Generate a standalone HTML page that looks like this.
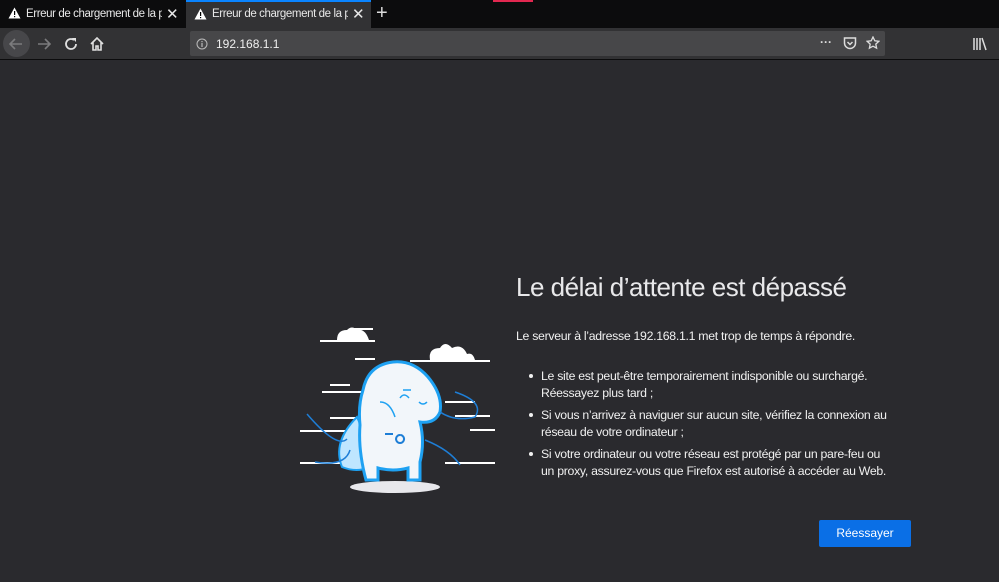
<!DOCTYPE html>
<html><head><meta charset="utf-8"><style>
*{margin:0;padding:0;box-sizing:border-box}
body{width:999px;height:582px;overflow:hidden;background:#2a2a2e;font-family:"Liberation Sans",sans-serif;color:#f9f9fa;position:relative}
.tabs{position:absolute;left:0;top:0;width:999px;height:28px;background:#0c0c0d}
.tab{position:absolute;top:0;height:28px;width:185px;font-size:11.5px;color:#e8e8e8;letter-spacing:-0.4px}
.tab .t{position:absolute;left:26px;top:8px;width:136px;overflow:hidden;white-space:nowrap}
.tab .x{position:absolute;left:166px;top:5px;font-size:15px}
.tab svg{position:absolute;left:8px;top:7px}
.tb{position:absolute;left:0;top:28px;width:999px;height:32px;background:#323234;border-bottom:1px solid #0c0c0d}
.url{position:absolute;left:190px;top:3px;width:695px;height:25px;background:#474749;border-radius:2px}
.url span{position:absolute;left:26px;top:6px;font-size:12px;color:#f0f0f0}
h1{position:absolute;left:516px;top:272px;font-size:26px;font-weight:300;color:#e8e8ea;letter-spacing:-0.5px;white-space:nowrap}
.p{position:absolute;left:516px;font-size:12.3px;color:#f0f0f0;line-height:17px;letter-spacing:-0.3px;white-space:nowrap}
.b{position:absolute;left:529px;top:374px;width:4px;height:4px;border-radius:50%;background:#f0f0f0}
.btn{position:absolute;left:819px;top:520px;width:92px;height:27px;background:#0a6fe6;border-radius:2px;font-size:12px;text-align:center;line-height:27px;color:#fff}
</style></head><body>
<div class="tabs">
<div class="tab" style="left:0"><svg width="13" height="12"><path d="M6.5 0.5L12.5 11.5H0.5Z" fill="#fff"/><rect x="6" y="4" width="1.2" height="4" fill="#000"/><rect x="6" y="9" width="1.2" height="1.2" fill="#000"/></svg><div class="t">Erreur de chargement de la page</div><div class="x">✕</div></div>
<div class="tab" style="left:186px;background:#323234;border-top:2px solid #0a84ff"><svg width="13" height="12" style="top:6px"><path d="M6.5 0.5L12.5 11.5H0.5Z" fill="#fff"/><rect x="6" y="4" width="1.2" height="4" fill="#000"/><rect x="6" y="9" width="1.2" height="1.2" fill="#000"/></svg><div class="t" style="top:6px">Erreur de chargement de la page</div><div class="x" style="top:3px">✕</div></div>
<div style="position:absolute;left:376px;top:2px;font-size:20px;color:#ddd">+</div>
<div style="position:absolute;left:493px;top:0;width:40px;height:2px;background:#e22850"></div>
</div>
<div class="tb">
<div style="position:absolute;left:3px;top:2px;width:27px;height:27px;border-radius:50%;background:#47474a"></div>
<svg style="position:absolute;left:8px;top:8px" width="16" height="16"><path d="M14 8H2M7 3L2 8l5 5" stroke="#7b7b7d" stroke-width="1.6" fill="none"/></svg>
<svg style="position:absolute;left:36px;top:8px" width="16" height="16"><path d="M2 8H14M9 3l5 5-5 5" stroke="#7b7b7d" stroke-width="1.6" fill="none"/></svg>
<svg style="position:absolute;left:63px;top:8px" width="16" height="16"><path d="M13 8A5 5 0 1 1 11 4" stroke="#e0e0e0" stroke-width="1.8" fill="none"/><path d="M9 2h4v4z" fill="#e0e0e0"/></svg>
<svg style="position:absolute;left:89px;top:8px" width="16" height="16"><path d="M2 8L8 2l6 6M4 6.5V14h3v-4h2v4h3V6.5" stroke="#e0e0e0" stroke-width="1.6" fill="none"/></svg>
<div class="url"><svg style="position:absolute;left:6px;top:7px" width="12" height="12"><circle cx="6" cy="6" r="5" stroke="#bbb" fill="none"/><rect x="5.4" y="5" width="1.2" height="4" fill="#bbb"/><rect x="5.4" y="3" width="1.2" height="1.2" fill="#bbb"/></svg><span>192.168.1.1</span>
<div style="position:absolute;left:630px;top:4px;font-size:12px;color:#ddd;font-weight:bold">···</div>
<svg style="position:absolute;left:653px;top:5px" width="14" height="14"><path d="M1.5 2h11v5a5.5 5.5 0 0 1-11 0z" stroke="#ddd" stroke-width="1.5" fill="none"/><path d="M4.5 6l2.5 2.5L9.5 6" stroke="#ddd" stroke-width="1.5" fill="none"/></svg>
<svg style="position:absolute;left:676px;top:5px" width="14" height="14"><path d="M7 1l1.8 3.8 4 .5-3 2.8.8 4L7 10.2 3.4 12.1l.8-4-3-2.8 4-.5z" stroke="#ddd" stroke-width="1.3" fill="none"/></svg>
</div>
<svg style="position:absolute;left:972px;top:8px" width="16" height="16"><path d="M2 2v12M5 2v12M8 2v12M10 2l4 12" stroke="#ddd" stroke-width="1.5"/></svg>
</div>
<svg style="position:absolute;left:295px;top:322px" width="205" height="175">
<g stroke="#fff" stroke-width="2">
<path d="M25 19h55M56 7h22M115 39h80M60 37h20M35 63h20M27 70h75M35 96h35M5 109h100M5 141h80"/>
<path d="M150 80h30M160 94h35M175 108h25M150 141h50"/>
</g>
<path d="M42 18q0-10 10-10 5-5 10 0 8-2 12 10z" fill="#fff"/>
<path d="M135 38q-2-12 10-12q5-8 12 0q10-5 15 6q6-2 8 6z" fill="#fff"/>
<ellipse cx="100" cy="165" rx="45" ry="6" fill="#e8e8ec"/>
<path d="M62 95q-25 25-15 50q20 8 35-5z" fill="#bfe6ff" stroke="#1ea1f2" stroke-width="2"/>
<path d="M68 68q5-25 30-28q20-2 35 15q15 18 12 35q-5 12-20 10q5 20 0 40v18h-12v-12q-15 4-30 0v12h-12q-8-30-6-55q-2-20 3-35z" fill="#f2f6fa" stroke="#1ea1f2" stroke-width="3"/>
<path d="M12 92q30 35 40 25M160 70q30 10 20 25q-20 5-35-5M20 140q30 5 35-12M130 118q25 10 35 25" stroke="#1e7ed6" stroke-width="1.5" fill="none"/>
<path d="M108 68h8M114 76q-5-6-9 0M124 80q4 4 8 0M85 80q10 0 15 15" stroke="#1ea1f2" stroke-width="1.5" fill="none"/>
<path d="M90 112l8 0M105 113a4 4 0 1 0 0.1 0" stroke="#1e7ed6" stroke-width="2" fill="none"/>
</svg>
<h1>Le délai d’attente est dépassé</h1>
<div class="p" style="top:328px">Le serveur à l’adresse 192.168.1.1 met trop de temps à répondre.</div>
<div class="b"></div><div class="b" style="top:413px"></div><div class="b" style="top:452px"></div>
<div class="p" style="left:541px;top:368px">Le site est peut-être temporairement indisponible ou surchargé.<br>Réessayez plus tard ;</div>
<div class="p" style="left:541px;top:407px">Si vous n’arrivez à naviguer sur aucun site, vérifiez la connexion au<br>réseau de votre ordinateur ;</div>
<div class="p" style="left:541px;top:446px">Si votre ordinateur ou votre réseau est protégé par un pare-feu ou<br>un proxy, assurez-vous que Firefox est autorisé à accéder au Web.</div>
<div class="btn">Réessayer</div>
</body></html>
